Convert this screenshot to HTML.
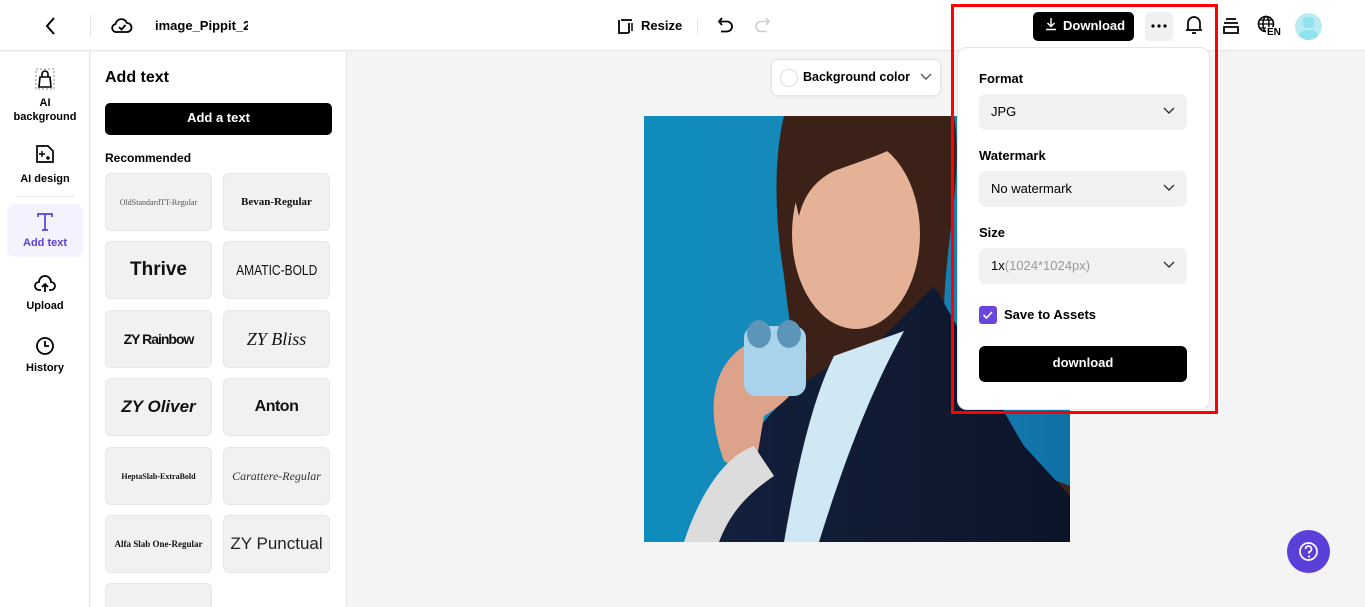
<!DOCTYPE html>
<html><head><meta charset="utf-8"><style>
*{box-sizing:border-box;margin:0;padding:0}
html,body{width:1365px;height:607px;overflow:hidden}
body{font-family:"Liberation Sans",sans-serif;background:#f4f4f4;position:relative;color:#000}
.a{position:absolute}
.top{left:0;top:0;width:1365px;height:51px;background:#fff;border-bottom:1px solid #e6e6e6}
.b{font-weight:bold}
.side{left:0;top:52px;width:90px;height:555px;background:#fff;border-right:1px solid #e6e6e6}
.panel{left:91px;top:52px;width:256px;height:555px;background:#fff;border-right:1px solid #e6e6e6;overflow:hidden}
.nav{position:absolute;left:7px;width:76px;text-align:center;font-size:11px;font-weight:bold;line-height:14px}
.card{position:absolute;width:107px;height:58px;background:#f1f1f1;border:1px solid #e6e6e6;border-radius:6px;display:flex;align-items:center;justify-content:center;color:#111;white-space:nowrap;overflow:hidden}
.sel{position:absolute;left:21px;width:208px;height:36px;background:#f1f1f1;border-radius:7px;font-size:13px;padding-left:12px;line-height:36px}
.sel svg{position:absolute;right:12px;top:13px}
.lab{position:absolute;left:21px;font-size:13px;font-weight:bold}
</style></head><body>
<div class="a top">
<svg class="a" style="left:44px;top:16px" width="14" height="20" viewBox="0 0 14 20"><path d="M10 2 L3 10 L10 18" stroke="#000" stroke-width="2" fill="none"/></svg>
<div class="a" style="left:90px;top:15px;width:1px;height:22px;background:#e5e5e5"></div>
<svg class="a" style="left:111px;top:15px" width="22" height="20" viewBox="0 0 22 20"><path d="M6 17 H16 A4.5 4.5 0 0 0 16 8 A6 6 0 0 0 4.5 9 A4 4 0 0 0 6 17Z" stroke="#000" stroke-width="1.8" fill="none"/><path d="M8 12 L10.5 14.5 L14.5 10" stroke="#000" stroke-width="1.8" fill="none"/></svg>
<div class="a b" style="left:155px;top:18px;font-size:13px;width:93px;overflow:hidden;white-space:nowrap">image_Pippit_2025</div>
<svg class="a" style="left:617px;top:17px" width="18" height="18" viewBox="0 0 18 18"><path d="M2 3 V16 H12 M4 3 H15 M12 6 V16" stroke="#000" stroke-width="1.8" fill="none"/><path d="M15 6 V14" stroke="#000" stroke-width="1.5"/></svg>
<div class="a b" style="left:641px;top:18px;font-size:13px">Resize</div>
<div class="a" style="left:697px;top:18px;width:1px;height:16px;background:#e5e5e5"></div>
<svg class="a" style="left:717px;top:16px" width="18" height="18" viewBox="0 0 18 18"><path d="M5 2 L2 5.5 L5 9 M2 5.5 H10 A5 5 0 0 1 10 15.5 H4" stroke="#000" stroke-width="1.8" fill="none"/></svg>
<svg class="a" style="left:753px;top:16px" width="18" height="18" viewBox="0 0 18 18"><path d="M13 2 L16 5.5 L13 9 M16 5.5 H8 A5 5 0 0 0 8 15.5 H14" stroke="#ccc" stroke-width="1.6" fill="none"/></svg>
<div class="a b" style="left:1033px;top:12px;width:101px;height:29px;background:#000;border-radius:5px;color:#fff;font-size:13px;line-height:27px;padding-left:30px">Download</div>
<svg class="a" style="left:1045px;top:17px" width="12" height="14" viewBox="0 0 12 14"><path d="M6 1 V9 M2.5 6 L6 9.5 L9.5 6 M1 12.5 H11" stroke="#fff" stroke-width="1.4" fill="none"/></svg>
<div class="a" style="left:1145px;top:12px;width:28px;height:29px;background:#f0f0f0;border-radius:5px"></div>
<svg class="a" style="left:1149px;top:23px" width="20" height="6"><circle cx="4" cy="3" r="1.6" fill="#000"/><circle cx="10" cy="3" r="1.6" fill="#000"/><circle cx="16" cy="3" r="1.6" fill="#000"/></svg>
<svg class="a" style="left:1184px;top:14px" width="20" height="22" viewBox="0 0 20 22"><path d="M4 16 V9 A6 6 0 0 1 16 9 V16 H2 H18 M8 19 H12" stroke="#000" stroke-width="1.7" fill="none"/></svg>
<svg class="a" style="left:1222px;top:16px" width="18" height="20" viewBox="0 0 18 20"><path d="M4 3 H14 M2 7 H16 M2 11 H16 V17 H2Z" stroke="#000" stroke-width="1.8" fill="none"/></svg>
<svg class="a" style="left:1257px;top:15px" width="22" height="20" viewBox="0 0 22 20"><circle cx="9" cy="9" r="7.5" stroke="#000" stroke-width="1.6" fill="none"/><ellipse cx="9" cy="9" rx="3" ry="7.5" stroke="#000" stroke-width="1.4" fill="none"/><path d="M1.5 9 H16.5 M3 5 H15 M3 13 H9" stroke="#000" stroke-width="1.3"/></svg>
<div class="a b" style="left:1266px;top:27px;font-size:10px;background:#fff;padding:0 1px">EN</div>
<div class="a" style="left:1295px;top:13px;width:27px;height:27px;border-radius:50%;background:#b8ecf2;overflow:hidden"><div class="a" style="left:8px;top:4px;width:11px;height:11px;background:#8ee3ee;border-radius:3px"></div><div class="a" style="left:3px;top:17px;width:21px;height:14px;background:#8ee3ee;border-radius:8px 8px 0 0"></div></div>
</div>

<div class="a side">
<div class="nav" style="top:15px"><svg width="22" height="24" viewBox="0 0 22 24"><rect x="2" y="2" width="18" height="20" stroke="#888" stroke-dasharray="2 2" fill="none"/><path d="M5 20 L6 10 H16 L17 20Z M8 10 V7 A3 3 0 0 1 14 7 V10" stroke="#000" stroke-width="1.6" fill="none"/></svg><div style="margin-top:1px">AI<br>background</div></div>
<div class="nav" style="top:91px"><svg width="22" height="22" viewBox="0 0 22 22"><path d="M3 3 H14 L19 8 V19 H3Z" stroke="#000" stroke-width="1.7" fill="none"/><path d="M8 8 V14 M5 11 H11 M14 13 V17 M12 15 H16" stroke="#000" stroke-width="1.4"/></svg><div style="margin-top:3px">AI design</div></div>
<div class="a" style="left:16px;top:144px;width:58px;height:1px;background:#e5e5e5"></div>
<div class="nav" style="top:152px;height:53px;background:#f4f2ff;border-radius:8px;color:#5b3fd9;padding-top:8px"><svg width="20" height="20" viewBox="0 0 20 20"><path d="M3 5 V2 H17 V5 M10 2 V18 M7 18 H13" stroke="#5b3fd9" stroke-width="1.7" fill="none"/></svg><div>Add text</div></div>
<div class="nav" style="top:222px"><svg width="22" height="20" viewBox="0 0 22 20"><path d="M7 16 H5 A4 4 0 0 1 5 8 A6 6 0 0 1 17 8 A4 4 0 0 1 17 16 H15 M11 18 V10 M8 13 L11 10 L14 13" stroke="#000" stroke-width="1.8" fill="none"/></svg><div style="margin-top:1px">Upload</div></div>
<div class="nav" style="top:283px"><svg width="22" height="22" viewBox="0 0 22 22"><circle cx="11" cy="11" r="8" stroke="#000" stroke-width="1.8" fill="none"/><path d="M11 6 V11 H15" stroke="#000" stroke-width="1.8" fill="none"/></svg><div>History</div></div>
</div>

<div class="a panel">
<div class="a b" style="left:14px;top:17px;font-size:16px">Add text</div>
<div class="a b" style="left:14px;top:51px;width:227px;height:32px;background:#000;border-radius:5px;color:#fff;font-size:13px;text-align:center;line-height:30px">Add a text</div>
<div class="a b" style="left:14px;top:99px;font-size:12px">Recommended</div>
<div class="card" style="left:14px;top:121px;font-family:'Liberation Serif',serif;font-size:8px;color:#555">OldStandardTT-Regular</div>
<div class="card" style="left:132px;top:121px;font-family:'Liberation Serif',serif;font-size:11px;font-weight:bold">Bevan-Regular</div>
<div class="card" style="left:14px;top:189px;font-size:19px;font-weight:bold">Thrive</div>
<div class="card" style="left:132px;top:189px;font-size:15px"><span style="display:inline-block;transform:scaleX(0.8)">AMATIC-BOLD</span></div>
<div class="card" style="left:14px;top:258px;font-size:14px;font-weight:bold;letter-spacing:-1px">ZY Rainbow</div>
<div class="card" style="left:132px;top:258px;font-family:'Liberation Serif',serif;font-size:18px;font-style:italic">ZY Bliss</div>
<div class="card" style="left:14px;top:326px;font-size:17px;font-weight:bold;font-style:italic">ZY Oliver</div>
<div class="card" style="left:132px;top:326px;font-size:16px;font-weight:bold;letter-spacing:-0.5px">Anton</div>
<div class="card" style="left:14px;top:395px;font-family:'Liberation Serif',serif;font-size:8px;font-weight:bold">HeptaSlab-ExtraBold</div>
<div class="card" style="left:132px;top:395px;font-family:'Liberation Serif',serif;font-size:12px;font-style:italic;color:#333">Carattere-Regular</div>
<div class="card" style="left:14px;top:463px;font-family:'Liberation Serif',serif;font-size:9px;font-weight:bold">Alfa Slab One-Regular</div>
<div class="card" style="left:132px;top:463px;font-size:17px;color:#222">ZY Punctual</div>
<div class="card" style="left:14px;top:531px;height:30px;border-bottom:none;border-radius:6px 6px 0 0"></div>
</div>

<div class="a" style="left:771px;top:59px;width:170px;height:37px;background:#fff;border:1px solid #e3e3e3;border-radius:7px;box-shadow:0 1px 3px rgba(0,0,0,.06)">
<div class="a" style="left:8px;top:9px;width:18px;height:18px;border-radius:50%;border:1px solid #ddd"></div>
<div class="a b" style="left:31px;top:10px;font-size:12.5px">Background color</div>
<svg class="a" style="left:148px;top:13px" width="12" height="8" viewBox="0 0 12 8"><path d="M1 1 L6 6 L11 1" stroke="#555" stroke-width="1.4" fill="none"/></svg>
</div>

<svg class="a" style="left:644px;top:116px" width="426" height="426" viewBox="0 0 426 426">
<defs><linearGradient id="bg" x1="0" x2="1"><stop offset="0" stop-color="#0f8cbc"/><stop offset="0.6" stop-color="#1a86b8"/><stop offset="1" stop-color="#1070a5"/></linearGradient>
<linearGradient id="jk" x1="0" x2="1"><stop offset="0" stop-color="#14213d"/><stop offset="1" stop-color="#0c1428"/></linearGradient></defs>
<rect width="426" height="426" fill="url(#bg)"/>
<path d="M140 0 H310 C320 60 300 130 300 200 C320 280 350 330 400 360 L426 370 V426 H200 C170 350 150 250 140 160 C130 100 130 40 140 0Z" fill="#3b2118"/>
<ellipse cx="212" cy="118" rx="64" ry="95" fill="#e6b297"/>
<path d="M140 0 H290 C270 30 230 40 190 55 C170 65 160 80 155 100 C145 60 142 30 140 0Z" fill="#3b2118"/>
<path d="M60 426 C80 340 140 260 230 230 L290 170 C320 220 350 280 380 330 L426 380 V426Z" fill="url(#jk)"/>
<path d="M190 240 L260 215 C230 270 205 330 175 426 H140 C155 340 170 280 190 240Z" fill="#cfe8f3"/>
<path d="M80 345 C60 290 70 250 100 230 L160 225 C170 260 145 285 120 300 L110 360Z" fill="#dca38a"/>
<path d="M40 426 C55 380 80 340 110 330 L130 360 C100 380 85 400 75 426Z" fill="#dcdcdc"/>
<rect x="100" y="210" width="62" height="70" rx="12" fill="#a9d3ea"/>
<ellipse cx="115" cy="218" rx="12" ry="14" fill="#5d95b8"/><ellipse cx="145" cy="218" rx="12" ry="14" fill="#5d95b8"/>
</svg>

<div class="a" style="left:951px;top:4px;width:267px;height:410px;border:3px solid #f00"></div>
<div class="a" style="left:957px;top:47px;width:253px;height:363px;background:#fff;border:1px solid #e5e5e5;border-radius:10px">
<div class="lab" style="top:23px">Format</div>
<div class="sel" style="top:46px">JPG<svg width="12" height="8" viewBox="0 0 12 8"><path d="M1 1 L6 6 L11 1" stroke="#333" stroke-width="1.4" fill="none"/></svg></div>
<div class="lab" style="top:100px">Watermark</div>
<div class="sel" style="top:123px">No watermark<svg width="12" height="8" viewBox="0 0 12 8"><path d="M1 1 L6 6 L11 1" stroke="#333" stroke-width="1.4" fill="none"/></svg></div>
<div class="lab" style="top:177px">Size</div>
<div class="sel" style="top:200px">1x<span style="color:#999">(1024*1024px)</span><svg width="12" height="8" viewBox="0 0 12 8"><path d="M1 1 L6 6 L11 1" stroke="#333" stroke-width="1.4" fill="none"/></svg></div>
<div class="a" style="left:21px;top:258px;width:18px;height:18px;background:#6a45e0;border-radius:3px"><svg width="18" height="18" viewBox="0 0 18 18"><path d="M4.5 9 L7.5 12 L13 6" stroke="#fff" stroke-width="1.6" fill="none"/></svg></div>
<div class="lab" style="left:46px;top:259px">Save to Assets</div>
<div class="a b" style="left:21px;top:298px;width:208px;height:36px;background:#000;border-radius:6px;color:#fff;font-size:13px;text-align:center;line-height:34px">download</div>
</div>

<div class="a" style="left:1287px;top:530px;width:43px;height:43px;border-radius:50%;background:#5b3fd9">
<svg width="43" height="43" viewBox="0 0 43 43"><circle cx="21.5" cy="21.5" r="8.5" stroke="#fff" stroke-width="1.7" fill="none"/><path d="M18.5 19 A3 3 0 1 1 22 22 V23.5" stroke="#fff" stroke-width="1.7" fill="none"/><circle cx="22" cy="26.5" r="1.1" fill="#fff"/></svg>
</div>
</body></html>
